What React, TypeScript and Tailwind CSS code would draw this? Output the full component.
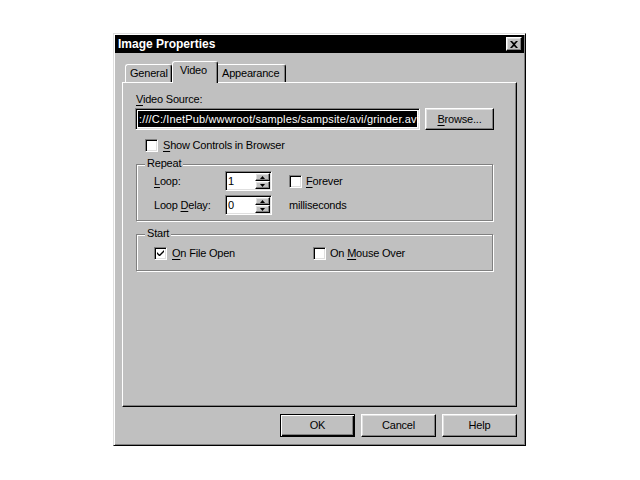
import type { ReactNode } from 'react';

const raised =
  'border border-t-white border-l-white border-r-black border-b-black shadow-[inset_-1px_-1px_#808080,inset_1px_1px_#dfdfdf]';
const sunken =
  'border border-t-[#808080] border-l-[#808080] border-r-white border-b-white shadow-[inset_1px_1px_#000,inset_-1px_-1px_#dfdfdf]';

function U({ children }: { children: ReactNode }) {
  return <span className="underline underline-offset-[2px]">{children}</span>;
}

function CheckBox({ checked = false }: { checked?: boolean }) {
  return (
    <span className={`w-[13px] h-[13px] bg-white flex items-center justify-center shrink-0 ${sunken}`}>
      {checked && (
        <svg width="7" height="7" viewBox="0 0 7 7">
          <path d="M0 2 L0 4 L2 6 L3 6 L7 2 L7 0 L2.5 4.5 Z" fill="#000" />
        </svg>
      )}
    </span>
  );
}

function Spinner({ value }: { value: string }) {
  return (
    <div className={`w-[47px] h-[20px] bg-white flex ${sunken}`}>
      <span className="flex-1 pl-[2px] leading-[16px] pt-[1px]">{value}</span>
      <div className="w-[15px] flex flex-col my-[1px] mr-[1px]">
        <div className={`flex-1 bg-[#c0c0c0] flex items-center justify-center ${raised}`}>
          <svg width="5" height="3" viewBox="0 0 5 3">
            <path d="M2.5 0 L5 3 L0 3 Z" fill="#000" />
          </svg>
        </div>
        <div className={`flex-1 bg-[#c0c0c0] flex items-center justify-center ${raised}`}>
          <svg width="5" height="3" viewBox="0 0 5 3">
            <path d="M0 0 L5 0 L2.5 3 Z" fill="#000" />
          </svg>
        </div>
      </div>
    </div>
  );
}

function Group({ label, className, children }: { label: string; className: string; children: ReactNode }) {
  return (
    <div
      className={`relative border border-[#808080] shadow-[inset_1px_1px_white,1px_1px_white] ${className}`}
    >
      <span className="absolute left-[8px] top-[-8px] bg-[#c0c0c0] px-[2px] leading-[13px]">{label}</span>
      {children}
    </div>
  );
}

function Button({ children, isDefault = false }: { children: ReactNode; isDefault?: boolean }) {
  return (
    <button
      className={`w-[75px] h-[23px] bg-[#c0c0c0] flex items-center justify-center ${
        isDefault
          ? 'border border-black shadow-[inset_1px_1px_white,inset_-1px_-1px_black,inset_-2px_-2px_#808080]'
          : raised
      }`}
    >
      {children}
    </button>
  );
}

export default function App() {
  return (
    <div
      className="w-[640px] h-[480px] bg-white pt-[33px] pl-[113px] text-[11px] tracking-[-0.2px] text-black leading-[13px]"
      style={{ fontFamily: '"Liberation Sans", Arial, sans-serif' }}
    >
      <div className="w-[413px] h-[413px] bg-[#c0c0c0] border border-t-[#dfdfdf] border-l-[#dfdfdf] border-r-black border-b-black shadow-[inset_1px_1px_white,inset_-1px_-1px_#808080] p-[1px] flex flex-col">
        {/* Title bar */}
        <div className="h-[18px] bg-black flex items-center justify-between pl-[3px] pr-[2px]">
          <span className="text-white font-bold text-[12px] tracking-normal">Image Properties</span>
          <span className={`w-[16px] h-[14px] bg-[#c0c0c0] flex items-center justify-center ${raised}`}>
            <svg width="8" height="7" viewBox="0 0 8 7">
              <path d="M0 0h2l2 2 2-2h2L5 3.5 8 7H6L4 5 2 7H0l3-3.5z" fill="#000" />
            </svg>
          </span>
        </div>

        <div className="px-[7px] pt-[8px] flex flex-col">
          {/* Tabs */}
          <div className="h-[21px] flex items-end pl-[3px]">
            <div className="w-[47px] h-[18px] border-t border-l border-r border-t-white border-l-white border-r-black shadow-[inset_-1px_0_#808080] rounded-t-[3px] flex items-center pl-[4px]">
              General
            </div>
            <div className="relative z-10 w-[46px] h-[22px] mb-[-1px] bg-[#c0c0c0] border-t border-l border-r border-t-white border-l-white border-r-black shadow-[inset_-1px_0_#808080] rounded-t-[3px] pl-[7px] pt-[2px]">
              Video
            </div>
            <div className="w-[68px] h-[18px] border-t border-r border-t-white border-r-black shadow-[inset_-1px_0_#808080] rounded-tr-[3px] flex items-center pl-[4px]">
              Appearance
            </div>
          </div>

          {/* Panel */}
          <div className="h-[325px] border border-t-white border-l-white border-r-black border-b-black shadow-[inset_-1px_-1px_#808080] pl-[12px] pt-[10px] flex flex-col">
            <span className="ml-[1px]">
              <U>V</U>ideo Source:
            </span>
            <div className="mt-[2px] flex">
              <div className={`w-[285px] h-[22px] bg-white p-[2px] overflow-hidden ${sunken}`}>
                <div className="h-full bg-black text-white whitespace-nowrap leading-[16px] pl-[1px] tracking-[0.15px]">
                  :///C:/InetPub/wwwroot/samples/sampsite/avi/grinder.avi
                </div>
              </div>
              <div className="ml-[5px]">
                <button className={`w-[69px] h-[22px] bg-[#c0c0c0] flex items-center justify-center ${raised}`}>
                  <span>
                    <U>B</U>rowse...
                  </span>
                </button>
              </div>
            </div>

            <div className="mt-[9px] ml-[10px] flex items-center gap-[5px]">
              <CheckBox />
              <span>
                <U>S</U>how Controls in Browser
              </span>
            </div>

            <Group label="Repeat" className="mt-[12px] ml-[1px] w-[357px] h-[57px] pt-[6px] pl-[17px]">
              <div className="flex items-center h-[20px]">
                <span className="w-[71px]">
                  <U>L</U>oop:
                </span>
                <Spinner value="1" />
                <div className="ml-[17px] flex items-center gap-[4px]">
                  <CheckBox />
                  <span>
                    <U>F</U>orever
                  </span>
                </div>
              </div>
              <div className="flex items-center h-[20px] mt-[4px]">
                <span className="w-[71px]">
                  Loop <U>D</U>elay:
                </span>
                <Spinner value="0" />
                <span className="ml-[17px]">milliseconds</span>
              </div>
            </Group>

            <Group label="Start" className="mt-[13px] ml-[1px] w-[357px] h-[37px] pt-[12px] pl-[17px]">
              <div className="flex items-center">
                <div className="w-[159px] flex items-center gap-[5px]">
                  <CheckBox checked />
                  <span>
                    <U>O</U>n File Open
                  </span>
                </div>
                <div className="flex items-center gap-[4px]">
                  <CheckBox />
                  <span>
                    On <U>M</U>ouse Over
                  </span>
                </div>
              </div>
            </Group>
          </div>

          {/* Buttons */}
          <div className="mt-[7px] flex justify-end gap-[6px]">
            <Button isDefault>OK</Button>
            <Button>Cancel</Button>
            <Button>Help</Button>
          </div>
        </div>
      </div>
    </div>
  );
}
